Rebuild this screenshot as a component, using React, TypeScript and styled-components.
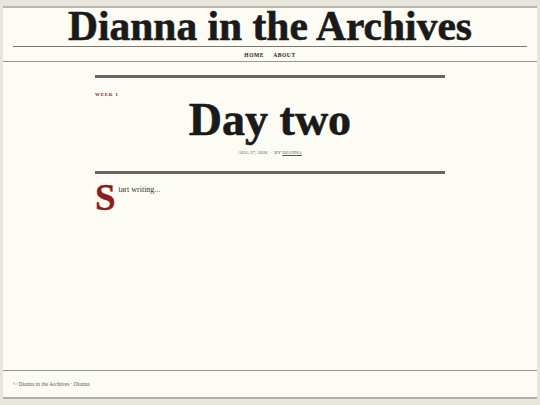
import React from 'react';
import styled, { createGlobalStyle } from 'styled-components';

const GlobalStyle = createGlobalStyle`
  html, body {
    margin: 0;
    padding: 0;
    background: #e7e5dc;
  }
  body {
    font-family: 'Liberation Serif', 'DejaVu Serif', serif;
    color: #1a1a1a;
  }
`;

const Page = styled.div`
  margin: 6px 3px 0;
  height: 393px;
  box-sizing: border-box;
  background: #fdfcf4;
  border-top: 2px solid #b9b7ad;
  border-bottom: 2px solid #b3b1a7;
  display: flex;
  flex-direction: column;
`;

const Masthead = styled.header`
  padding: 0 10px;
`;

const SiteTitle = styled.h1`
  margin: 0;
  font-size: 41.5px;
  line-height: 36px;
  font-weight: 700;
  text-align: center;
  -webkit-text-stroke: 0.6px #1a1a1a;
  padding-bottom: 2px;
  border-bottom: 1px solid #77766f;
`;

const Nav = styled.nav`
  display: flex;
  justify-content: center;
  gap: 9px;
  padding: 5px 0 2px;
  border-bottom: 1px solid #9a9990;
`;

const NavLink = styled.a`
  font-size: 5.5px;
  line-height: 7px;
  font-weight: 700;
  letter-spacing: 0.6px;
  text-transform: uppercase;
  color: #222;
  text-decoration: none;
`;

const Main = styled.main`
  flex: 1;
  display: flex;
  justify-content: center;
  padding-top: 13px;
`;

const Article = styled.article`
  width: 350px;
`;

const Rule = styled.hr`
  margin: 0;
  border: 0;
  height: 3px;
  background: #66655f;
`;

const Kicker = styled.div`
  margin-top: 13px;
  font-size: 5px;
  line-height: 7px;
  font-weight: 700;
  letter-spacing: 0.7px;
  text-transform: uppercase;
  color: #8b1d1d;
`;

const Title = styled.h2`
  margin: 0;
  font-size: 46px;
  line-height: 44px;
  font-weight: 700;
  text-align: center;
  -webkit-text-stroke: 0.6px #1a1a1a;
`;

const Meta = styled.div`
  margin: 7px 0 15px;
  text-align: center;
  font-size: 5px;
  line-height: 7px;
  text-transform: uppercase;
  color: #555;
`;

const Author = styled.span`
  text-decoration: underline;
`;

const Body = styled.p`
  margin: 10px 0 0;
  font-size: 8px;
  line-height: 11px;
  color: #333;
`;

const DropCap = styled.span`
  float: left;
  font-size: 37px;
  line-height: 27px;
  font-weight: 700;
  color: #8b1d1d;
  margin: 0 3px 0 0;
  -webkit-text-stroke: 0.4px #8b1d1d;
`;

const Footer = styled.footer`
  border-top: 1px solid #9a9990;
  padding: 0 10px;
  height: 26px;
  display: flex;
  align-items: center;
  font-size: 5.5px;
  color: #555;
`;

export default function App() {
  return (
    <>
      <GlobalStyle />
      <Page>
        <Masthead>
          <SiteTitle>Dianna in the Archives</SiteTitle>
        </Masthead>
        <Nav>
          <NavLink href="#">Home</NavLink>
          <NavLink href="#">About</NavLink>
        </Nav>
        <Main>
          <Article>
            <Rule />
            <Kicker>Week 1</Kicker>
            <Title>Day two</Title>
            <Meta>
              Aug 27, 2026 &nbsp;·&nbsp; By <Author>Dianna</Author>
            </Meta>
            <Rule />
            <Body>
              <DropCap>S</DropCap>tart writing...
            </Body>
          </Article>
        </Main>
        <Footer>© Dianna in the Archives · Dianna</Footer>
      </Page>
    </>
  );
}
